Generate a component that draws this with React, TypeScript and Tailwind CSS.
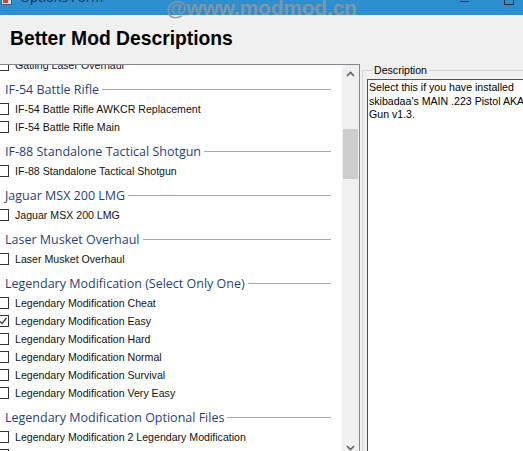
import React from "react";

type Row = { kind: "h" | "i"; text: string; checked?: boolean };

const rows: Row[] = [
  { kind: "i", text: "Gatling Laser Overhaul" },
  { kind: "h", text: "IF-54 Battle Rifle" },
  { kind: "i", text: "IF-54 Battle Rifle AWKCR Replacement" },
  { kind: "i", text: "IF-54 Battle Rifle Main" },
  { kind: "h", text: "IF-88 Standalone Tactical Shotgun" },
  { kind: "i", text: "IF-88 Standalone Tactical Shotgun" },
  { kind: "h", text: "Jaguar MSX 200 LMG" },
  { kind: "i", text: "Jaguar MSX 200 LMG" },
  { kind: "h", text: "Laser Musket Overhaul" },
  { kind: "i", text: "Laser Musket Overhaul" },
  { kind: "h", text: "Legendary Modification (Select Only One)" },
  { kind: "i", text: "Legendary Modification Cheat" },
  { kind: "i", text: "Legendary Modification Easy", checked: true },
  { kind: "i", text: "Legendary Modification Hard" },
  { kind: "i", text: "Legendary Modification Normal" },
  { kind: "i", text: "Legendary Modification Survival" },
  { kind: "i", text: "Legendary Modification Very Easy" },
  { kind: "h", text: "Legendary Modification Optional Files" },
  { kind: "i", text: "Legendary Modification 2 Legendary Modification" },
  { kind: "i", text: "Legendary Modification 2 Legendary Effects" },
];

function CheckBox({ checked }: { checked?: boolean }) {
  return (
    <div className="w-[12px] h-[12px] shrink-0 border border-[#333333] bg-white flex items-center justify-center">
      {checked && (
        <svg width="10" height="10" viewBox="0 0 10 10">
          <polyline points="1.5,5 4,7.5 8.5,2" fill="none" stroke="#333333" strokeWidth="1.2" />
        </svg>
      )}
    </div>
  );
}

export default function App() {
  return (
    <div
      className="relative w-[523px] h-[451px] overflow-hidden bg-[#f0f0f0] flex flex-col"
      style={{ fontFamily: '"Liberation Sans", Arial, sans-serif' }}
    >
      {/* title bar */}
      <div className="relative h-[15px] shrink-0 bg-[#2d8fd0] overflow-hidden">
        <div className="absolute left-[1px] top-[-6px] w-[11px] h-[11px] bg-[#d7dde6] border border-[#4a5a70]">
          <div className="w-[5px] h-[3px] bg-[#c44] mt-[5px] ml-[1px]" />
        </div>
        <div
          className="absolute left-[20px] top-[-9px] text-[13px] leading-[13px] text-[#1b2733]"
          style={{ fontFamily: '"Open Sans", sans-serif' }}
        >
          Options Form
        </div>
        <div className="absolute left-[460px] top-[1px] w-[9px] h-[1px] bg-[#1b2733]" />
        <div className="absolute left-[504px] top-[-5px] w-[10px] h-[10px] border border-[#1b2733]" />
      </div>
      <div
        className="absolute left-[166px] top-[-3px] text-[21px] leading-[21px] font-bold text-[#8a97a4] opacity-90 tracking-[-0.2px]"
        style={{ fontFamily: '"Liberation Sans", Arial, sans-serif' }}
      >
        @www.modmod.cn
      </div>

      {/* header */}
      <div className="h-[49px] shrink-0 pl-[10px] pt-[13px]">
        <div className="text-[19.3px] leading-[22px] font-bold text-black">Better Mod Descriptions</div>
      </div>

      {/* main */}
      <div className="flex flex-1 min-h-0">
        <div className="ml-[-4px] w-[364px] h-[393px] shrink-0 border border-[#828790] bg-white flex overflow-hidden">
          <div className="flex-1 overflow-hidden">
            <div className="mt-[-9px] flex flex-col">
              {rows.map((r, idx) =>
                r.kind === "h" ? (
                  <div key={idx} className="h-[26px] pt-[4px] flex items-center pl-[8px] pr-[11px]">
                    <div className="h-[17px] flex items-center flex-1">
                      <span
                        className="text-[12.5px] leading-[17px] text-[#1f3f7a] whitespace-nowrap"
                        style={{ fontFamily: '"Open Sans", "Noto Sans", sans-serif' }}
                      >
                        {r.text}
                      </span>
                      <div className="flex-1 h-px bg-[#a9a9a9] ml-[3px]" />
                    </div>
                  </div>
                ) : (
                  <div key={idx} className="h-[18px] flex items-center">
                    <CheckBox checked={r.checked} />
                    <span className="ml-[6px] text-[10.6px] leading-[13px] text-[#111] whitespace-nowrap">{r.text}</span>
                  </div>
                )
              )}
            </div>
          </div>
          {/* scrollbar */}
          <div className="w-[17px] shrink-0 bg-[#f0f0f0] flex flex-col">
            <div className="h-[17px] flex items-center justify-center">
              <svg width="9" height="6" viewBox="0 0 9 6">
                <polyline points="1,5 4.5,1.5 8,5" fill="none" stroke="#606060" strokeWidth="1.6" />
              </svg>
            </div>
            <div className="h-[47px]" />
            <div className="mx-[1px] h-[50px] bg-[#cdcdcd]" />
            <div className="flex-1" />
            <div className="h-[17px] flex items-center justify-center">
              <svg width="9" height="6" viewBox="0 0 9 6">
                <polyline points="1,1 4.5,4.5 8,1" fill="none" stroke="#606060" strokeWidth="1.6" />
              </svg>
            </div>
          </div>
        </div>

        {/* description group */}
        <div className="relative ml-[2px] mt-[6px] flex-1 border-t border-l border-[#d5d5d5]">
          <div className="absolute left-[9px] top-[-8px] px-[2px] bg-[#f0f0f0] text-[10.6px] leading-[14px] text-black">
            Description
          </div>
          <div className="ml-[4px] mt-[8px] h-[400px] border border-[#505050] bg-white px-[1px] pt-[1px]">
            <div className="text-[10.6px] leading-[13.5px] text-black w-[165px]">
              Select this if you have installed skibadaa's MAIN .223 Pistol AKA Gun v1.3.
            </div>
          </div>
        </div>
      </div>
    </div>
  );
}
